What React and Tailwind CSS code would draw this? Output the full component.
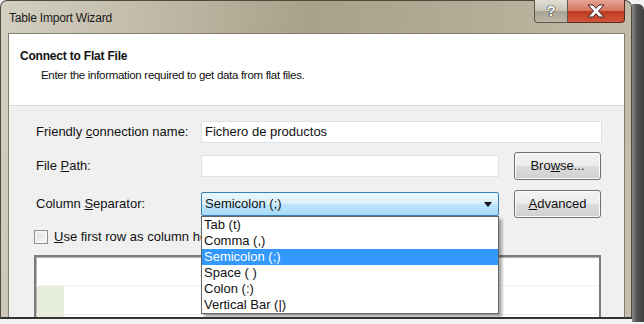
export default function App() {
  const items = ["Tab (t)", "Comma (,)", "Semicolon (;)", "Space ( )", "Colon (:)", "Vertical Bar (|)"];

  return (
    <div className="w-[644px] h-[324px] overflow-hidden bg-[#f2f2f2] font-['Liberation_Sans',Arial,sans-serif] text-[13px] text-[#111]">
      <div className="flex items-start">
        {/* ventana */}
        <div className="w-[632px] h-[319px] rounded-t-[7px] border border-[#4d4a42] border-b-2 border-b-[#333] bg-[linear-gradient(100deg,#d3cfc2_0%,#c3bcaa_20%,#a9a189_45%,#b3ac96_70%,#c6c0ad_100%)] flex flex-col pl-[7px] pr-[6px]">
          {/* barra de título */}
          <div className="h-[32px] flex items-start justify-between">
            <div className="pt-[9px] pl-[1px] text-[12px] tracking-[-0.2px] text-[#1a1a1a] leading-[16px]">Table Import Wizard</div>
            <div className="flex mt-[-1px]">
              <div className="w-[34px] h-[23px] rounded-bl-[4px] border border-[#5c5748] border-t-0 bg-[linear-gradient(#e2dfd6,#c7c3b6_50%,#a8a392_52%,#bdb8a8)] flex items-center justify-center">
                <span className="text-white font-bold text-[15px] [text-shadow:0_0_1px_#222,0_0_1px_#222,0_0_1px_#222]">?</span>
              </div>
              <div className="w-[57px] h-[23px] rounded-br-[4px] border border-[#5c2a20] border-t-0 border-l-0 bg-[linear-gradient(#e6a595,#d6735f_48%,#c23b22_52%,#d2563a)] flex items-center justify-center">
                <svg width="20" height="14" viewBox="0 0 20 14">
                  <path d="M2 1h5l3 3.4 3-3.4h5l-5.5 6 5.5 6h-5l-3-3.4-3 3.4h-5l5.5-6z" fill="#fff" stroke="#3a2a26" strokeWidth="1" strokeLinejoin="round" />
                </svg>
              </div>
            </div>
          </div>

          {/* área cliente */}
          <div className="flex-1 bg-[#f0f0f0] border border-[#857f6c] border-b-0 overflow-hidden flex flex-col">
            <div className="h-[72px] bg-white border-b border-[#d9d9d9] shrink-0">
              <div className="pt-[14px] pl-[11px] font-bold text-[12px] tracking-[-0.2px] leading-[16px]">Connect to Flat File</div>
              <div className="pt-[3px] pl-[32px] text-[11.5px] tracking-[-0.3px] leading-[16px]">Enter the information required to get data from flat files.</div>
            </div>

            <div className="pl-[25px] flex flex-col">
              <div className="mt-[15px] h-[22px] flex items-center">
                <div className="w-[167px] pl-[2px]">Friendly <u>c</u>onnection name:</div>
                <div className="w-[401px] h-[22px] bg-white border border-[#dde2e7] pl-[3px] flex items-center">Fichero de productos</div>
              </div>

              <div className="mt-[9px] h-[28px] flex items-center">
                <div className="w-[167px] pl-[2px]">File <u>P</u>ath:</div>
                <div className="w-[298px] h-[22px] bg-white border border-[#dde2e7]" />
                <button className="ml-[15px] w-[87px] h-[28px] rounded-[3px] border border-[#707070] bg-[linear-gradient(#f4f4f4,#ebebeb_50%,#dcdcdc_52%,#d0d0d0)] shadow-[inset_0_0_0_1px_#fbfbfb]">
                  Bro<u>w</u>se...
                </button>
              </div>

              <div className="mt-[10px] h-[28px] flex items-center">
                <div className="w-[167px] pl-[2px]">Column <u>S</u>eparator:</div>
                <div className="relative w-[298px] h-[24px]">
                  <div className="w-full h-full rounded-[2px] border border-[#3c7fb1] bg-[linear-gradient(#eaf6fd,#d9f0fc_50%,#bee6fd_52%,#a7d9f5)] flex items-center justify-between pl-[3px] pr-[6px]">
                    <span>Semicolon (;)</span>
                    <svg width="8" height="5" viewBox="0 0 8 5">
                      <path d="M0 0h8L4 5z" fill="#111" />
                    </svg>
                  </div>
                  {/* lista desplegable */}
                  <div className="absolute left-0 top-[24px] w-[298px] z-10 bg-white border border-[#646464] shadow-[3px_3px_3px_rgba(0,0,0,0.35)]">
                    {items.map((it, i) => (
                      <div
                        key={it}
                        className={i === 2 ? "h-[16px] leading-[16px] pl-[2px] bg-[#3399ff] text-white" : "h-[16px] leading-[16px] pl-[2px]"}
                      >
                        {it}
                      </div>
                    ))}
                  </div>
                </div>
                <button className="ml-[15px] w-[87px] h-[28px] rounded-[3px] border border-[#707070] bg-[linear-gradient(#f4f4f4,#ebebeb_50%,#dcdcdc_52%,#d0d0d0)] shadow-[inset_0_0_0_1px_#fbfbfb]">
                  <u>A</u>dvanced
                </button>
              </div>

              <div className="mt-[11px] h-[15px] flex items-center">
                <div className="w-[14px] h-[14px] border border-[#8e8f8f] bg-[linear-gradient(135deg,#dcdcdc,#fafafa)] shadow-[inset_0_0_0_2px_#f4f4f4]" />
                <div className="ml-[6px] whitespace-nowrap"><u>U</u>se first row as column headers</div>
              </div>

              <div className="mt-[11px] w-[567px] h-[80px] bg-white border-2 border-[#7d7d7d] shadow-[inset_1px_1px_0_#b5b5b5]">
                <div className="h-[29px] border-b border-[#f1f1ea]" />
                <div className="h-[29px] border-b border-[#ebebe4] flex">
                  <div className="w-[27px] bg-[#e7eedd] ml-[1px]" />
                </div>
                <div className="h-[20px] flex">
                  <div className="w-[27px] bg-[#e7eedd] ml-[1px]" />
                </div>
              </div>
            </div>
          </div>
        </div>

        {/* sombra */}
        <div className="w-[12px] h-[318px] mt-[4px] rounded-tr-[6px] bg-[linear-gradient(90deg,#8a8a8a,#555_40%,#3c3c3c)]" />
      </div>
    </div>
  );
}
